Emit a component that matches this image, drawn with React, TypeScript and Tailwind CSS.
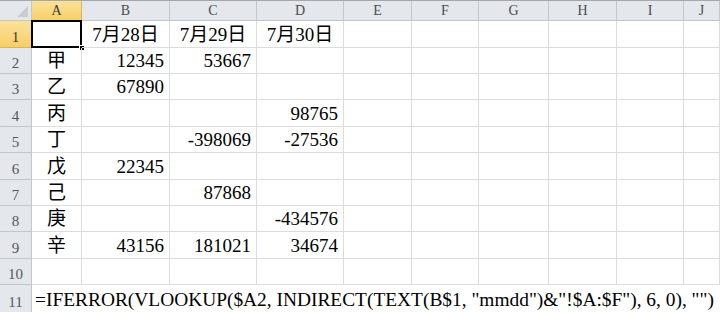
import React from 'react';

const cols = ['A', 'B', 'C', 'D', 'E', 'F', 'G', 'H', 'I', 'J'];
const rowHeights = ['h-[27px]', 'h-[26px]', 'h-[26px]', 'h-[27px]', 'h-[26px]', 'h-[27px]', 'h-[26px]', 'h-[26px]', 'h-[27px]', 'h-[26px]'];

const data: string[][] = [
  ['', '7月28日', '7月29日', '7月30日'],
  ['甲', '12345', '53667', ''],
  ['乙', '67890', '', ''],
  ['丙', '', '', '98765'],
  ['丁', '', '-398069', '-27536'],
  ['戊', '22345', '', ''],
  ['己', '', '87868', ''],
  ['庚', '', '', '-434576'],
  ['辛', '43156', '181021', '34674'],
  ['', '', '', ''],
];

const gridCols = 'grid grid-cols-[32px_50px_88px_87px_87px_68px_67px_70px_68px_67px_1fr]';

export default function App() {
  return (
    <div className="w-[720px] h-[312px] overflow-hidden bg-white text-black font-['Liberation_Serif','Times_New_Roman','Noto_Sans_CJK_TC',serif]">
      {/* column headers */}
      <div className={`${gridCols} h-[21px] border-t border-[#a4a7ab]`}>
        <div className="relative bg-[#e4e7eb] border-r border-b border-[#c3c7cc]">
          <svg className="absolute right-[3px] bottom-[3px]" width="11" height="11" viewBox="0 0 11 11">
            <polygon points="11,0 11,11 0,11" fill="#c9ccd1" />
          </svg>
        </div>
        {cols.map((c) => (
          <div
            key={c}
            className={`flex items-center justify-center border-r border-b text-[14px] leading-none ${
              c === 'A'
                ? 'bg-gradient-to-b from-[#fbe29a] to-[#f7cf67] border-[#e0b452] text-[#3a3a3a]'
                : 'bg-[#e4e7eb] border-[#c3c7cc] text-[#4a4d52]'
            }`}
          >
            {c}
          </div>
        ))}
      </div>

      {/* data rows */}
      {data.map((row, r) => (
        <div key={r} className={`${gridCols} ${rowHeights[r]}`}>
          <div
            className={`flex items-end justify-center pb-[2px] border-r border-b text-[15px] leading-none ${
              r === 0
                ? 'bg-gradient-to-b from-[#fbe29a] to-[#f7cf67] border-[#e0b452] text-[#3a3a3a]'
                : 'bg-[#e4e7eb] border-[#c3c7cc] text-[#55585c]'
            }`}
          >
            {r + 1}
          </div>
          {cols.map((c, ci) => {
            const v = row[ci] ?? '';
            const isHead = r === 0 && ci > 0;
            const isName = ci === 0;
            return (
              <div
                key={c}
                className={`relative flex items-end pb-[3px] border-r border-b border-[#dadcdd] text-[19px] leading-none whitespace-nowrap ${
                  isHead || isName ? 'justify-center' : 'justify-end pr-[5px]'
                }`}
              >
                {v}
                {r === 0 && ci === 0 && (
                  <>
                    <div className="absolute -left-[1px] -top-[1px] -right-[1px] -bottom-[1px] border-2 border-black" />
                    <div className="absolute -right-[4px] -bottom-[4px] w-[6px] h-[6px] bg-black border border-white" />
                  </>
                )}
              </div>
            );
          })}
        </div>
      ))}

      {/* row 11 with overflowing formula */}
      <div className="grid grid-cols-[32px_1fr] h-[27px]">
        <div className="flex items-end justify-center pb-[2px] bg-[#e4e7eb] border-r border-[#c3c7cc] text-[15px] leading-none text-[#55585c]">
          11
        </div>
        <div className="flex items-end pl-[3px] pb-[3px] text-[19.4px] leading-none whitespace-nowrap">
          =IFERROR(VLOOKUP($A2, INDIRECT(TEXT(B$1, "mmdd")&"!$A:$F"), 6, 0), "")
        </div>
      </div>
    </div>
  );
}
